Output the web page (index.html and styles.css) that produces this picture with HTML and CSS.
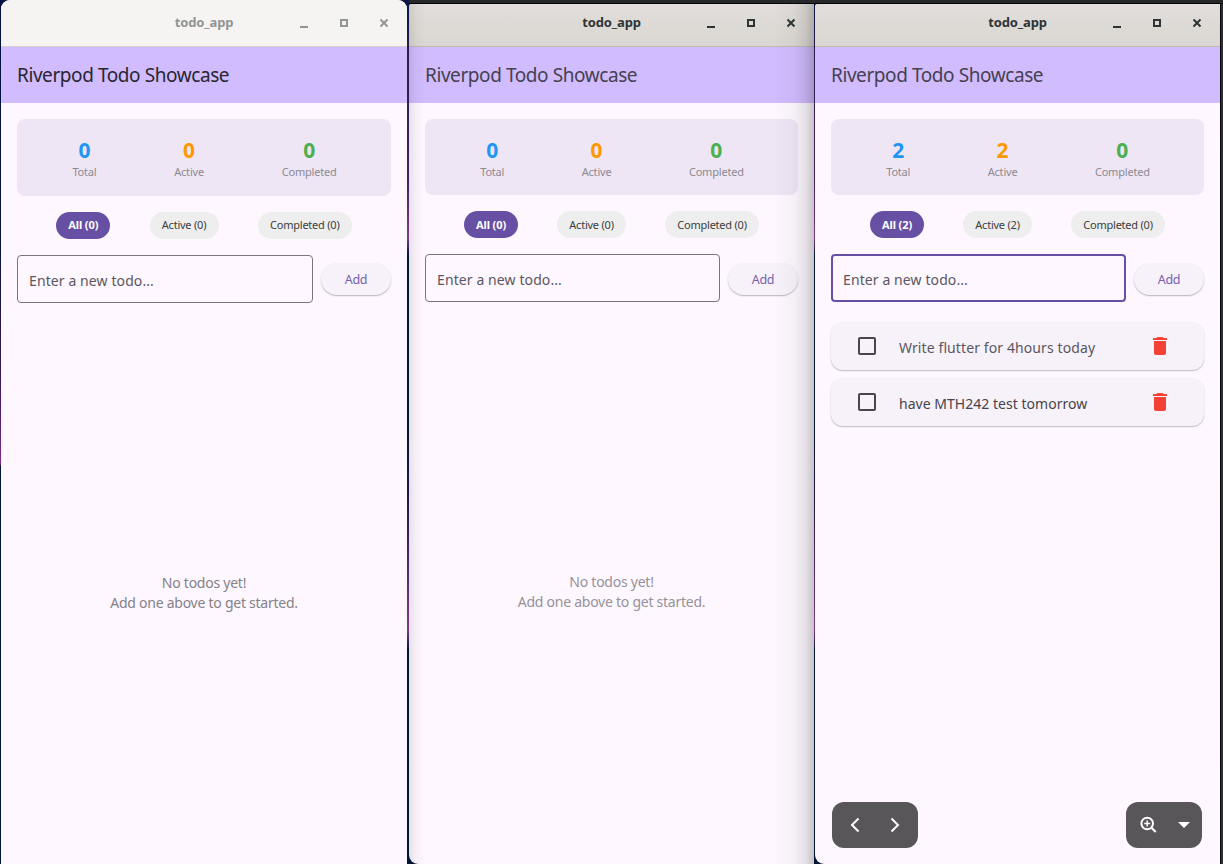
FILE: index.html
```
<!DOCTYPE html>
<html lang="en">
<head>
<meta charset="utf-8">
<title>todo_app</title>
<link rel="stylesheet" href="styles.css">
</head>
<body>
<main class="desktop">
  <section class="window inactive">
    <header class="titlebar">
      <span class="caption">todo_app</span>
      <svg class="controls" viewBox="0 0 90 14"><path d="M0 10h8v2H0z"/><path fill-rule="evenodd" d="M40 3h8v8h-8zM42 5v4h4V5z"/><path class="cross" d="M80.5 3.5l7 7m0-7l-7 7"/></svg>
    </header>
    <h1 class="appbar">Riverpod Todo Showcase</h1>
    <div class="content">
      <div class="stats">
        <div class="stat total"><b>0</b><span>Total</span></div>
        <div class="stat active"><b>0</b><span>Active</span></div>
        <div class="stat completed"><b>0</b><span>Completed</span></div>
      </div>
      <div class="filters">
        <span class="chip selected">All (0)</span>
        <span class="chip mid">Active (0)</span>
        <span class="chip wide">Completed (0)</span>
      </div>
      <div class="entry"><div class="field">Enter a new todo...</div><div class="add">Add</div></div>
      <p class="empty">No todos yet!<br>Add one above to get started.</p>
    </div>
  </section>
  <section class="window shaded">
    <header class="titlebar">
      <span class="caption">todo_app</span>
      <svg class="controls" viewBox="0 0 90 14"><path d="M0 10h8v2H0z"/><path fill-rule="evenodd" d="M40 3h8v8h-8zM42 5v4h4V5z"/><path class="cross" d="M80.5 3.5l7 7m0-7l-7 7"/></svg>
    </header>
    <h1 class="appbar">Riverpod Todo Showcase</h1>
    <div class="content">
      <div class="stats">
        <div class="stat total"><b>0</b><span>Total</span></div>
        <div class="stat active"><b>0</b><span>Active</span></div>
        <div class="stat completed"><b>0</b><span>Completed</span></div>
      </div>
      <div class="filters">
        <span class="chip selected">All (0)</span>
        <span class="chip mid">Active (0)</span>
        <span class="chip wide">Completed (0)</span>
      </div>
      <div class="entry"><div class="field">Enter a new todo...</div><div class="add">Add</div></div>
      <p class="empty">No todos yet!<br>Add one above to get started.</p>
    </div>
  </section>
  <section class="window front">
    <header class="titlebar">
      <span class="caption">todo_app</span>
      <svg class="controls" viewBox="0 0 90 14"><path d="M0 10h8v2H0z"/><path fill-rule="evenodd" d="M40 3h8v8h-8zM42 5v4h4V5z"/><path class="cross" d="M80.5 3.5l7 7m0-7l-7 7"/></svg>
    </header>
    <h1 class="appbar">Riverpod Todo Showcase</h1>
    <div class="content">
      <div class="stats">
        <div class="stat total"><b>2</b><span>Total</span></div>
        <div class="stat active"><b>2</b><span>Active</span></div>
        <div class="stat completed"><b>0</b><span>Completed</span></div>
      </div>
      <div class="filters">
        <span class="chip selected">All (2)</span>
        <span class="chip mid">Active (2)</span>
        <span class="chip wide">Completed (0)</span>
      </div>
      <div class="entry"><div class="field focused">Enter a new todo...</div><div class="add">Add</div></div>
      <ul class="todos">
        <li class="todo"><span class="box"></span><span class="label">Write flutter for 4hours today</span><svg class="trash" viewBox="5 3 14 18"><path d="M6 19c0 1.1.9 2 2 2h8c1.100 0 2-.9 2-2V7H6v12zM19 4h-3.500l-1-1h-5l-1 1H5v2h14V4z"/></svg></li>
        <li class="todo"><span class="box"></span><span class="label second">have MTH242 test tomorrow</span><svg class="trash" viewBox="5 3 14 18"><path d="M6 19c0 1.100.9 2 2 2h8c1.100 0 2-.9 2-2V7H6v12zM19 4h-3.500l-1-1h-5l-1 1H5v2h14V4z"/></svg></li>
      </ul>
    </div>
    <div class="overlay">
      <svg class="pill" width="86" height="46" viewBox="0 0 86 46"><path d="M26.500 16.500L20 23l6.500 6.500M59.500 16.500L66 23l-6.500 6.500"/></svg>
      <svg class="pill" width="76" height="46" viewBox="0 0 76 46"><circle cx="21.200" cy="21.500" r="5.800"/><path d="M25.500 25.800l4.200 4.200"/><path class="plus" d="M21.200 18.500v6m-3-3h6"/><path class="caret" d="M52 20h12l-6 6z"/></svg>
    </div>
  </section>
</main>
</body>
</html>
```
FILE: styles.css
```
* { box-sizing: border-box; }
body { margin: 0; font-family: "Noto Sans", "Open Sans", sans-serif; }
.desktop {
  width: 1223px; height: 864px; overflow: hidden;
  display: grid; grid-template-columns: 406px 405px 405px; padding-left: 1px;
  background:
    linear-gradient(#26262b 0 3px, #060609 3px 4px, transparent 4px) 409px 0 / 814px 100% no-repeat,
    linear-gradient(#2c2c30, #2e3132) 1221px 0 / 2px 100% no-repeat,
    linear-gradient(90deg, #0b0b0d, #0b0b0d) 1220px 0 / 1px 100% no-repeat,
    linear-gradient(#0c1446 0, #2a1f4e 60px, #45215e 180px, #7c3b82 238px, #041637 255px, #041637 430px, #241748 500px, #7c3b82 630px, #041637 650px) 1px 0 / 1219px 100% no-repeat,
    linear-gradient(#041243 0, #041637 240px, #381a5c 380px, #7c2a82 464px, #041637 466px);
}
.window { height: 864px; background: #fef7ff; display: flex; flex-direction: column; position: relative; overflow: hidden; border-radius: 9px 9px 0 0; }
.shaded { margin: 4px 0 0 2px; width: 405px; height: 860px; border-radius: 3px 0 0 9px; }
.front { margin: 4px 0 0 3px; width: 405px; height: 860px; border-radius: 3px 0 0 9px; }
.shaded::after { content: ""; position: absolute; inset: 0; pointer-events: none;
  background: linear-gradient(90deg, rgba(0,0,0,.09), rgba(0,0,0,.03) 7px, transparent 16px),
    linear-gradient(270deg, rgba(0,0,0,.21), rgba(0,0,0,.09) 9px, rgba(0,0,0,.03) 20px, transparent 40px); }

.titlebar { height: 43px; flex: none; position: relative; display: grid; place-items: center; background: linear-gradient(#e1dedb, #dad6d1); border-bottom: 1px solid #bfb8b1; color: #2e3436; padding-bottom: 6px; }
.inactive .titlebar { height: 47px; background: #f5f4f2; border-color: #d5d0cc; color: #929595; padding: 0 0 2px; }
.caption { font-size: 13px; font-weight: 700; letter-spacing: -.12px; line-height: 18px; }
.controls { position: absolute; right: 17px; top: 12px; width: 90px; height: 14px; fill: currentColor; }
.inactive .controls { top: 16px; }
.cross { stroke: currentColor; stroke-width: 2; fill: none; }

.appbar { margin: 0; height: 56px; flex: none; padding-left: 16px; background: #d0bcff; color: #29252f; font-size: 19px; font-weight: 400; letter-spacing: -.42px; line-height: 56px; white-space: nowrap; }
.shaded .appbar, .front .appbar { color: #46404f; }
.content { flex: 1; padding: 16px; display: flex; flex-direction: column; }
.stats { height: 77px; flex: none; border-radius: 8px; background: #eee6f5; padding: 18px 15.500px 0 16.500px; display: flex; justify-content: space-around; }
.stat { display: flex; flex-direction: column; align-items: center; }
.stat b { font-size: 21px; line-height: 27px; font-weight: 700; }
.stat span { font-size: 11px; line-height: 16px; color: #8d8992; letter-spacing: -.2px; }
.total b { color: #2196f3; }
.active b { color: #ff9800; }
.completed b { color: #4caf50; }
.filters { margin-top: 16px; display: flex; justify-content: space-evenly; }
.chip { width: 54px; height: 27px; border-radius: 14px; background: #eee; color: #3d3d3d; font-size: 11px; line-height: 26px; text-align: center; letter-spacing: -.22px; white-space: nowrap; }
.mid { width: 69px; }
.wide { width: 94px; }
.selected { background: #6750a4; color: #fff; font-weight: 700; letter-spacing: -.1px; }
.shaded .chip, .front .chip { line-height: 27px; }
.entry { margin-top: 16px; height: 48px; flex: none; display: flex; gap: 8px; align-items: center; }
.field { flex: 1; height: 48px; border: 1px solid #79747e; border-radius: 4px; padding-left: 11px; font-size: 14px; line-height: 49px; letter-spacing: .1px; color: #5b5660; }
.focused { border: 2px solid #6750a4; padding-left: 10px; line-height: 47px; }
.add { width: 70px; height: 32px; border-radius: 16px; background: #f7f2fa; box-shadow: 0 1px 1.500px rgba(0,0,0,.28); color: #7560ad; font-size: 12.500px; line-height: 34px; text-align: center; letter-spacing: -.25px; }
.shaded .add, .front .add { margin-top: 1px; }
.empty { margin: auto; padding-top: 34px; font-size: 14px; line-height: 20px; letter-spacing: -.25px; color: #858188; text-align: center; white-space: nowrap; }
.shaded .stats, .front .stats { height: 76px; }
.shaded .empty { color: #96929a; }

.todos { list-style: none; margin: 20px 0 0; padding: 0; display: grid; gap: 8px; }
.todo { height: 48px; border-radius: 12px; background: #f7f2fa; box-shadow: 0 1px 1.500px rgba(0,0,0,.26); display: flex; align-items: center; padding: 0 37px 0 27px; }
.box { width: 18px; height: 18px; border: 2px solid #49454f; border-radius: 2px; }
.label { flex: 1; margin-left: 23px; padding-top: 2px; font-size: 14px; letter-spacing: .1px; color: #5b5660; white-space: nowrap; }
.second { color: #47434b; letter-spacing: .03px; }
.trash { width: 14px; height: 18px; fill: #f44336; }

.overlay { position: absolute; left: 17px; right: 18px; bottom: 16px; display: flex; justify-content: space-between; }
.pill { border-radius: 12px; background: #59565a; fill: none; stroke: #fff; stroke-width: 2; }
.pill .plus { stroke-width: 1.500; }
.pill .caret { fill: #fff; stroke: none; }
```
